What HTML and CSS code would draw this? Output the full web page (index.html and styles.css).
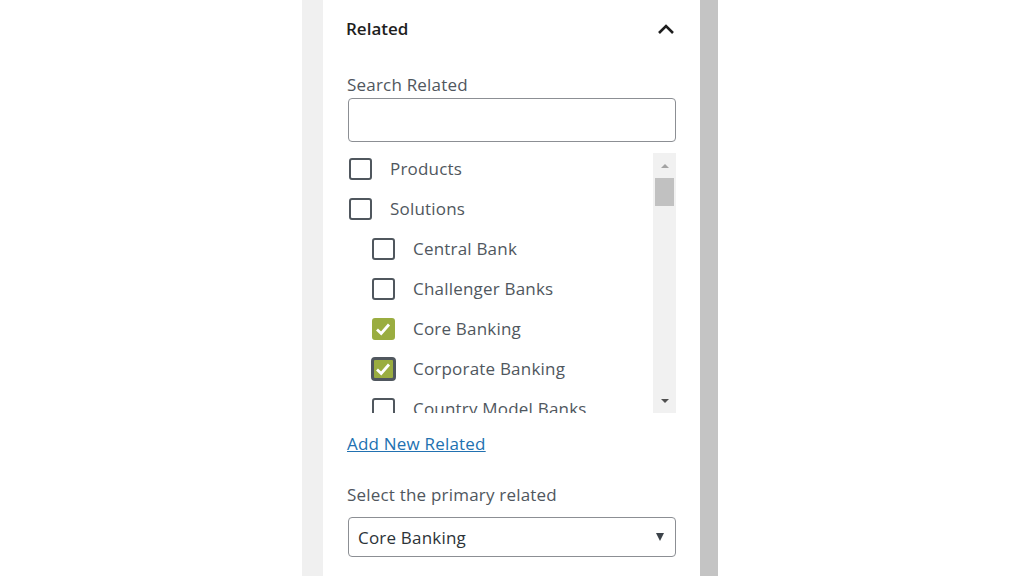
FILE: index.html
```html
<!DOCTYPE html>
<html lang="en">
<head>
<meta charset="utf-8">
<title>Related</title>
<link rel="stylesheet" href="styles.css">
</head>
<body>
<div class="shell">
  <div class="gutter"></div>
  <div class="panel">
    <div class="header">
      <h2 class="title">Related</h2>
      <svg class="chevron" width="18" height="12" viewBox="0 0 18 12"><path d="M2 10 L9 3 L16 10" fill="none" stroke="#1e1e1e" stroke-width="2.6"/></svg>
    </div>
    <label class="label">Search Related</label>
    <div class="input"></div>
    <div class="listbox">
      <ul class="list">
        <li class="row"><span class="cb"></span><span class="txt">Products</span></li>
        <li class="row"><span class="cb"></span><span class="txt">Solutions</span></li>
        <li class="row child"><span class="cb"></span><span class="txt">Central Bank</span></li>
        <li class="row child"><span class="cb"></span><span class="txt">Challenger Banks</span></li>
        <li class="row child"><span class="cb checked"><svg viewBox="0 0 22 22" width="22" height="22"><path d="M5 11.5 L9.2 15.5 L17 6.5" fill="none" stroke="#fff" stroke-width="2.8"/></svg></span><span class="txt">Core Banking</span></li>
        <li class="row child"><span class="cb checked focus"><svg viewBox="0 0 22 22" width="22" height="22"><path d="M5 11.5 L9.2 15.5 L17 6.5" fill="none" stroke="#fff" stroke-width="2.8"/></svg></span><span class="txt">Corporate Banking</span></li>
        <li class="row child"><span class="cb"></span><span class="txt">Country Model Banks</span></li>
      </ul>
      <div class="scrollbar">
        <div class="arrow-up"></div>
        <div class="thumb"></div>
        <div class="track-fill"></div>
        <div class="arrow-down"></div>
      </div>
    </div>
    <a class="link" href="#">Add New Related</a>
    <label class="label label-select">Select the primary related</label>
    <div class="select"><span>Core Banking</span><span class="caret"></span></div>
  </div>
  <div class="rail"></div>
</div>
</body>
</html>
```
FILE: styles.css
```css
html, body {
  margin: 0;
  padding: 0;
  background: #ffffff;
}
body {
  font-family: "Open Sans", "Noto Sans", sans-serif;
  font-size: 17px;
  letter-spacing: 0.2px;
  color: #50575e;
}
.shell {
  display: flex;
  height: 576px;
  margin-left: 302px;
}
.gutter {
  width: 21px;
  background: #f0f0f0;
}
.panel {
  width: 377px;
  box-sizing: border-box;
  padding: 0 24px 0 24px;
  display: flex;
  flex-direction: column;
  background: #fff;
}
.rail {
  width: 18px;
  background: #c4c4c4;
}
.header {
  height: 56px;
  display: flex;
  align-items: center;
  justify-content: space-between;
  padding-right: 1px;
}
.title {
  margin: 0;
  font-size: 17px;
  font-weight: 600;
  letter-spacing: 0;
  color: #1e1e1e;
  margin-left: -1px;
}
.chevron {
  display: block;
  margin-top: 2px;
}
.label {
  display: block;
  margin-top: 17px;
  line-height: 24px;
  height: 24px;
  color: #50575e;
}
.input {
  margin-top: 1px;
  margin-left: 1px;
  height: 44px;
  box-sizing: border-box;
  border: 1px solid #8c8f94;
  border-radius: 4px;
}
.listbox {
  margin-top: 11px;
  height: 260px;
  display: flex;
  overflow: hidden;
}
.list {
  flex: 1;
  list-style: none;
  margin: 0;
  padding: 5px 0 0 2px;
  overflow: hidden;
}
.row {
  display: flex;
  align-items: center;
  height: 22px;
  margin-bottom: 18px;
  color: #50575e;
}
.row.child {
  padding-left: 23px;
}
.cb {
  width: 23px;
  height: 22px;
  box-sizing: border-box;
  border: 2px solid #50575e;
  border-radius: 3px;
  flex: none;
  margin-right: 18px;
  position: relative;
}
.cb.checked {
  background: #9aad40;
  border-color: #9aad40;
}
.cb.checked svg {
  position: absolute;
  left: -2px;
  top: -2px;
}
.cb.focus {
  border: 3px solid #50575e;
  width: 25px;
  height: 24px;
  margin-left: -1px;
  margin-right: 17px;
  border-radius: 4px;
}
.cb.focus svg {
  left: -2px;
  top: -2px;
}
.txt {
  line-height: 22px;
  white-space: nowrap;
}
.scrollbar {
  width: 23px;
  background: #f1f1f1;
  display: flex;
  flex-direction: column;
  align-items: center;
  flex: none;
}
.arrow-up {
  margin-top: 11px;
  width: 0;
  height: 0;
  border-left: 4px solid transparent;
  border-right: 4px solid transparent;
  border-bottom: 4px solid #a3a3a3;
}
.thumb {
  margin-top: 10px;
  width: 19px;
  height: 28px;
  background: #c1c1c1;
}
.track-fill {
  flex: 1;
}
.arrow-down {
  margin-bottom: 10px;
  width: 0;
  height: 0;
  border-left: 4px solid transparent;
  border-right: 4px solid transparent;
  border-top: 4px solid #505050;
}
.link {
  margin-top: 19px;
  line-height: 24px;
  color: #2271b1;
  text-decoration: underline;
  align-self: flex-start;
}
.label-select {
  margin-top: 27px;
}
.select {
  margin-top: 10px;
  margin-left: 1px;
  height: 40px;
  box-sizing: border-box;
  border: 1px solid #8c8f94;
  border-radius: 4px;
  display: flex;
  align-items: center;
  justify-content: space-between;
  padding: 0 11px 0 9px;
  color: #2c3338;
}
.caret {
  width: 0;
  height: 0;
  border-left: 4px solid transparent;
  border-right: 4px solid transparent;
  border-top: 8px solid #3c434a;
}
```
